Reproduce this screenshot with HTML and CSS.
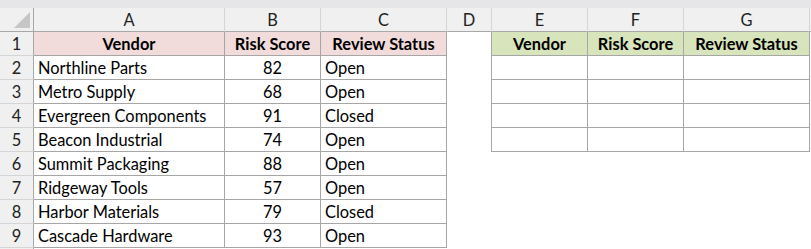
FILE: index.html
```html
<!DOCTYPE html>
<html lang="en">
<head>
  <meta charset="UTF-8">
  <title>Vendor Review</title>
  <link rel="stylesheet" href="styles.css">
</head>
<body>
  <div class="ribbon-edge"></div>
  <div class="sheet">
    <!-- column headers -->
    <div class="hd corner"><span class="tri"></span></div>
    <div class="hd">A</div>
    <div class="hd">B</div>
    <div class="hd">C</div>
    <div class="hd">D</div>
    <div class="hd">E</div>
    <div class="hd">F</div>
    <div class="hd">G</div>
    <div class="hd rest"></div>

    <!-- row 1 -->
    <div class="rn">1</div>
    <div class="c t th pink">Vendor</div>
    <div class="c t th pink">Risk Score</div>
    <div class="c t th pink">Review Status</div>
    <div class="c"></div>
    <div class="c t th green e">Vendor</div>
    <div class="c t th green">Risk Score</div>
    <div class="c t th green">Review Status</div>
    <div class="c"></div>

    <div class="rn">2</div>
    <div class="c t">Northline Parts</div>
    <div class="c t num">82</div>
    <div class="c t">Open</div>
    <div class="c"></div>
    <div class="c t e"></div>
    <div class="c t"></div>
    <div class="c t"></div>
    <div class="c"></div>

    <div class="rn">3</div>
    <div class="c t">Metro Supply</div>
    <div class="c t num">68</div>
    <div class="c t">Open</div>
    <div class="c"></div>
    <div class="c t e"></div>
    <div class="c t"></div>
    <div class="c t"></div>
    <div class="c"></div>

    <div class="rn">4</div>
    <div class="c t">Evergreen Components</div>
    <div class="c t num">91</div>
    <div class="c t">Closed</div>
    <div class="c"></div>
    <div class="c t e"></div>
    <div class="c t"></div>
    <div class="c t"></div>
    <div class="c"></div>

    <div class="rn">5</div>
    <div class="c t">Beacon Industrial</div>
    <div class="c t num">74</div>
    <div class="c t">Open</div>
    <div class="c"></div>
    <div class="c t e"></div>
    <div class="c t"></div>
    <div class="c t"></div>
    <div class="c"></div>

    <div class="rn">6</div>
    <div class="c t">Summit Packaging</div>
    <div class="c t num">88</div>
    <div class="c t">Open</div>
    <div class="c"></div>
    <div class="c"></div>
    <div class="c"></div>
    <div class="c"></div>
    <div class="c"></div>

    <div class="rn">7</div>
    <div class="c t">Ridgeway Tools</div>
    <div class="c t num">57</div>
    <div class="c t">Open</div>
    <div class="c"></div>
    <div class="c"></div>
    <div class="c"></div>
    <div class="c"></div>
    <div class="c"></div>

    <div class="rn">8</div>
    <div class="c t">Harbor Materials</div>
    <div class="c t num">79</div>
    <div class="c t">Closed</div>
    <div class="c"></div>
    <div class="c"></div>
    <div class="c"></div>
    <div class="c"></div>
    <div class="c"></div>

    <div class="rn">9</div>
    <div class="c t">Cascade Hardware</div>
    <div class="c t num">93</div>
    <div class="c t">Open</div>
    <div class="c"></div>
    <div class="c"></div>
    <div class="c"></div>
    <div class="c"></div>
    <div class="c"></div>

    <div class="rn"></div>
  </div>
</body>
</html>
```

FILE: styles.css
```css
* {
  box-sizing: border-box;
}
body {
  margin: 0;
  background: #fff;
  font-family: Lato, "Liberation Sans", sans-serif;
  font-size: 16.4px;
  color: #000;
  overflow: hidden;
}
.ribbon-edge {
  height: 8px;
  background: #e6e6e9;
}
.sheet {
  display: grid;
  grid-template-columns: 34px 191px 96px 126px 44px 97px 96px 126px 1fr;
  grid-auto-rows: 24px;
}
.hd {
  background: #f0f0f0;
  border-right: 1px solid #d5d5d5;
  border-bottom: 1px solid #a8a8a8;
  text-align: center;
  line-height: 24px;
  color: #222;
}
.hd:nth-child(5) {
  border-right: none;
}
.hd:nth-child(6) {
  border-left: 1px solid #d5d5d5;
}
.hd.rest {
  border-right: none;
}
.corner {
  display: flex;
  justify-content: flex-end;
  align-items: flex-end;
  padding: 0 3px 3px 0;
  border-right: 1px solid #a8a8a8;
}
.tri {
  width: 0;
  height: 0;
  border-left: 16px solid transparent;
  border-bottom: 16px solid #c6c6c6;
}
.rn {
  background: #f0f0f0;
  border-right: 1px solid #a8a8a8;
  border-bottom: 1px solid #d5d5d5;
  text-align: center;
  line-height: 24px;
  color: #222;
}
.c {
  line-height: 24px;
  padding: 0 4px;
  white-space: nowrap;
  overflow: hidden;
}
.t {
  border-right: 1px solid #a6a6a6;
  border-bottom: 1px solid #a6a6a6;
}
.e {
  border-left: 1px solid #a6a6a6;
}
.th {
  font-weight: bold;
  text-align: center;
}
.pink {
  background: #f2dcdb;
}
.green {
  background: #d8e4bc;
}
.num {
  text-align: center;
}
```
